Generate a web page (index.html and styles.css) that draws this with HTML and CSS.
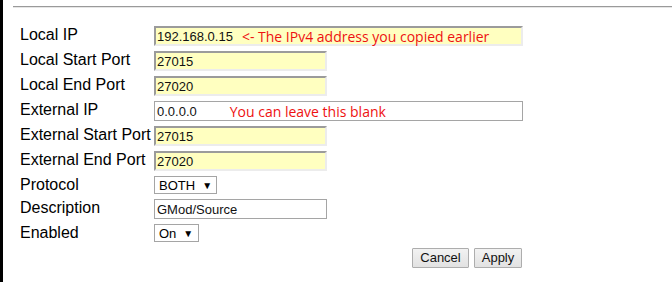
FILE: index.html
```html
<!DOCTYPE html>
<html>
<head>
<meta charset="utf-8">
<link rel="stylesheet" href="styles.css">
</head>
<body>
<div class="page">
  <div class="rule"></div>
  <div class="form">
    <div class="label">Local IP</div>
    <div class="field"><div class="box yellow wide"><span class="val">192.168.0.15</span><span class="note note-ip">&lt;- The IPv4 address you copied earlier</span></div></div>

    <div class="label">Local Start Port</div>
    <div class="field"><div class="box yellow narrow"><span class="val">27015</span></div></div>

    <div class="label">Local End Port</div>
    <div class="field"><div class="box yellow narrow"><span class="val">27020</span></div></div>

    <div class="label">External IP</div>
    <div class="field"><div class="box plain wide"><span class="val">0.0.0.0</span><span class="note note-ext">You can leave this blank</span></div></div>

    <div class="label">External Start Port</div>
    <div class="field"><div class="box yellow narrow"><span class="val">27015</span></div></div>

    <div class="label">External End Port</div>
    <div class="field"><div class="box yellow narrow"><span class="val">27020</span></div></div>

    <div class="label">Protocol</div>
    <div class="field"><div class="select sel-proto"><span>BOTH</span><span class="arrow">▼</span></div></div>

    <div class="label">Description</div>
    <div class="field"><div class="box plain narrow"><span class="val">GMod/Source</span></div></div>

    <div class="label">Enabled</div>
    <div class="field"><div class="select sel-on"><span>On</span><span class="arrow">▼</span></div></div>
  </div>
  <div class="buttons">
    <div class="btn btn-cancel">Cancel</div>
    <div class="btn btn-apply">Apply</div>
  </div>
</div>
</body>
</html>
```

FILE: styles.css
```css
html, body {
  margin: 0;
  padding: 0;
  background: #fff;
  height: 100%;
}
.page {
  box-sizing: border-box;
  height: 282px;
  border-left: 3px solid #000;
  overflow: hidden;
  font-family: "Liberation Sans", Arial, sans-serif;
  color: #000;
}
.rule {
  margin: 6px 0 0 10px;
  height: 0;
  border-top: 1px solid #9a9a9a;
  border-bottom: 1px solid #e6e6e6;
}
.form {
  display: grid;
  grid-template-columns: 134px 1fr;
  grid-template-rows: 25px 25px 25px 25px 25px 25px 23px 25px 24px;
  margin: 18px 0 0 17px;
}
.label {
  font-size: 16px;
  line-height: 18px;
  margin-top: 0;
  white-space: nowrap;
}
.field {
  display: flex;
  align-items: flex-start;
}
.box {
  box-sizing: border-box;
  height: 20px;
  display: flex;
  align-items: center;
  font-size: 13px;
  white-space: nowrap;
}
.yellow {
  background: #ffffc0;
  border-top: 2px solid #9b9b9b;
  border-left: 2px solid #9b9b9b;
  border-right: 2px solid #ececec;
  border-bottom: 2px solid #ececec;
  padding-left: 1px;
}
.plain {
  background: #fff;
  border: 1px solid #a5a5a5;
  padding-left: 2px;
}
.wide { width: 369px; }
.narrow { width: 173px; }
.val { color: #111; }
.note {
  font-family: "Open Sans", "Noto Sans", sans-serif;
  font-size: 14px;
  color: #ee1111;
}
.note-ip { margin-left: 9px; }
.note-ext { margin-left: 33px; }
.select {
  box-sizing: border-box;
  height: 18px;
  border: 1px solid #a5a5a5;
  background: #fff;
  display: flex;
  align-items: center;
  font-size: 13px;
  padding-left: 4px;
}
.arrow {
  font-size: 10px;
  margin-left: 7px;
}
.sel-proto { width: 63px; }
.sel-on { width: 45px; }
.buttons {
  display: flex;
  gap: 5px;
  margin: 0 0 0 409px;
}
.btn {
  box-sizing: border-box;
  height: 20px;
  border: 1px solid #adadad;
  border-radius: 1px;
  background: linear-gradient(#f2f2f2, #e2e2e2);
  font-size: 13px;
  line-height: 18px;
  text-align: center;
  color: #111;
}
.btn-cancel { width: 57px; }
.btn-apply { width: 48px; }
```
